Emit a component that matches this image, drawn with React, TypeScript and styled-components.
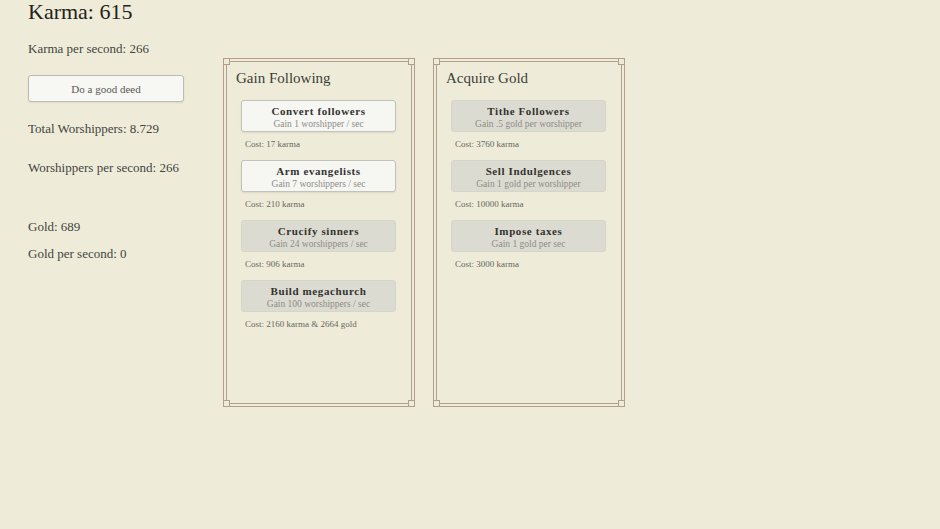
import styled, { createGlobalStyle } from "styled-components";

const GlobalStyle = createGlobalStyle`
  html, body {
    margin: 0;
    background: #eeecd9;
  }
  body {
    font-family: "Liberation Serif", "Times New Roman", serif;
    color: #3a3a36;
  }
`;

const Page = styled.div`
  display: flex;
  align-items: flex-start;
  padding: 0 28px;
  min-height: 529px;
  box-sizing: border-box;
`;

const Sidebar = styled.div`
  width: 195px;
  flex-shrink: 0;
`;

const Heading = styled.h1`
  margin: 0;
  padding-top: 1px;
  font-size: 22px;
  line-height: 22px;
  font-weight: normal;
  color: #222220;
`;

const Stat = styled.div<{ $gap: number }>`
  margin-top: ${(p) => p.$gap}px;
  font-size: 13px;
  line-height: 16px;
  color: #44443f;
`;

const DeedButton = styled.button`
  display: block;
  margin-top: 18px;
  width: 156px;
  height: 27px;
  box-sizing: border-box;
  background: #f7f7f4;
  border: 1px solid #bdbbb2;
  border-radius: 3px;
  box-shadow: 0 1px 2px rgba(0, 0, 0, 0.08);
  font-family: inherit;
  font-size: 11px;
  color: #5a5a55;
  cursor: pointer;
`;

const Panels = styled.div`
  display: flex;
  gap: 18px;
  margin-top: 58px;
`;

const Panel = styled.section`
  position: relative;
  width: 192px;
  height: 349px;
  box-sizing: border-box;
  border: 4px double #b39d8b;
`;

/* little square knots sitting on each corner of the frame */
const Corner = styled.span<{ $v: "top" | "bottom"; $h: "left" | "right" }>`
  position: absolute;
  ${(p) => p.$v}: -4px;
  ${(p) => p.$h}: -4px;
  width: 7px;
  height: 7px;
  box-sizing: border-box;
  background: #eeecd9;
  border: 1px solid #b39d8b;
`;

const PanelTitle = styled.h2`
  margin: 0;
  padding: 7px 0 0 9px;
  font-size: 15px;
  line-height: 18px;
  font-weight: normal;
  color: #3d3d38;
`;

const ItemList = styled.div`
  margin-top: 13px;
  padding: 0 14px;
`;

const Item = styled.div`
  margin-bottom: 10px;
`;

const ItemButton = styled.button<{ $enabled: boolean }>`
  display: flex;
  flex-direction: column;
  align-items: center;
  width: 155px;
  height: 32px;
  padding: 4px 0 0;
  box-sizing: border-box;
  border-radius: 3px;
  border: 1px solid ${(p) => (p.$enabled ? "#c4c2b8" : "#d6d5ca")};
  background: ${(p) => (p.$enabled ? "#f6f6f3" : "#dcdbd1")};
  box-shadow: ${(p) => (p.$enabled ? "0 1px 2px rgba(0,0,0,0.08)" : "none")};
  font-family: inherit;
  cursor: pointer;
`;

const ItemName = styled.span`
  font-size: 11px;
  line-height: 13px;
  font-weight: bold;
  letter-spacing: 0.6px;
  color: #33332f;
`;

const ItemEffect = styled.span`
  font-size: 9.5px;
  line-height: 12px;
  color: #8d8d87;
`;

const Cost = styled.div`
  margin-top: 6px;
  padding-left: 4px;
  font-size: 9px;
  line-height: 12px;
  color: #66665f;
`;

interface IUpgrade {
  name: string;
  effect: string;
  cost: string;
  enabled: boolean;
}

const following: IUpgrade[] = [
  { name: "Convert followers", effect: "Gain 1 worshipper / sec", cost: "Cost: 17 karma", enabled: true },
  { name: "Arm evangelists", effect: "Gain 7 worshippers / sec", cost: "Cost: 210 karma", enabled: true },
  { name: "Crucify sinners", effect: "Gain 24 worshippers / sec", cost: "Cost: 906 karma", enabled: false },
  { name: "Build megachurch", effect: "Gain 100 worshippers / sec", cost: "Cost: 2160 karma & 2664 gold", enabled: false },
];

const gold: IUpgrade[] = [
  { name: "Tithe Followers", effect: "Gain .5 gold per worshipper", cost: "Cost: 3760 karma", enabled: false },
  { name: "Sell Indulgences", effect: "Gain 1 gold per worshipper", cost: "Cost: 10000 karma", enabled: false },
  { name: "Impose taxes", effect: "Gain 1 gold per sec", cost: "Cost: 3000 karma", enabled: false },
];

function UpgradePanel({ title, items }: { title: string; items: IUpgrade[] }) {
  return (
    <Panel>
      <Corner $v="top" $h="left" />
      <Corner $v="top" $h="right" />
      <Corner $v="bottom" $h="left" />
      <Corner $v="bottom" $h="right" />
      <PanelTitle>{title}</PanelTitle>
      <ItemList>
        {items.map((item) => (
          <Item key={item.name}>
            <ItemButton $enabled={item.enabled}>
              <ItemName>{item.name}</ItemName>
              <ItemEffect>{item.effect}</ItemEffect>
            </ItemButton>
            <Cost>{item.cost}</Cost>
          </Item>
        ))}
      </ItemList>
    </Panel>
  );
}

export default function App() {
  return (
    <>
      <GlobalStyle />
      <Page>
        <Sidebar>
          <Heading>Karma: 615</Heading>
          <Stat $gap={18}>Karma per second: 266</Stat>
          <DeedButton>Do a good deed</DeedButton>
          <Stat $gap={19}>Total Worshippers: 8.729</Stat>
          <Stat $gap={23}>Worshippers per second: 266</Stat>
          <Stat $gap={43}>Gold: 689</Stat>
          <Stat $gap={11}>Gold per second: 0</Stat>
        </Sidebar>
        <Panels>
          <UpgradePanel title="Gain Following" items={following} />
          <UpgradePanel title="Acquire Gold" items={gold} />
        </Panels>
      </Page>
    </>
  );
}
